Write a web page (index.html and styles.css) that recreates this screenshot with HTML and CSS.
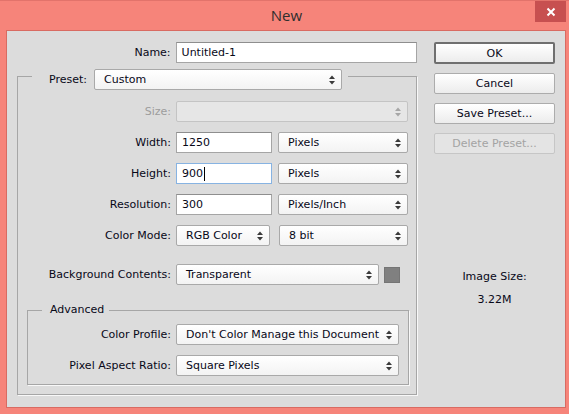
FILE: index.html
```html
<!DOCTYPE html>
<html lang="en">
<head>
<meta charset="utf-8">
<title>New</title>
<link rel="stylesheet" href="styles.css">
</head>
<body>
<div class="window">
  <header class="titlebar">
    <span class="tb-spacer"></span>
    <h1 class="title">New</h1>
    <div class="close" aria-label="Close">
      <svg width="10" height="10" viewBox="0 0 10 10"><path d="M1.5 1.5 L8.5 8.5 M8.5 1.5 L1.5 8.5" stroke="#fff" stroke-width="2" fill="none"/></svg>
    </div>
  </header>
  <main class="client">
    <section class="left">
      <div class="row">
        <span class="lbl lbl-name">Name:</span>
        <div class="input w-name">Untitled-1</div>
      </div>
      <fieldset class="group outer">
        <legend class="legend-preset">
          <span class="lbl-inline">Preset:</span>
          <span class="select w-preset"><span class="sel-text">Custom</span><svg class="arrows" width="6" height="10" viewBox="0 0 6 10"><polygon points="0,4 3,0.5 6,4"/><polygon points="0,6 3,9.5 6,6"/></svg></span>
        </legend>
        <div class="rows">
          <div class="row">
            <span class="lbl disabled">Size:</span>
            <span class="select w-size is-disabled"><span class="sel-text"></span><svg class="arrows" width="6" height="10" viewBox="0 0 6 10"><polygon points="0,4 3,0.5 6,4"/><polygon points="0,6 3,9.5 6,6"/></svg></span>
          </div>
          <div class="row">
            <span class="lbl">Width:</span>
            <div class="input w-num">1250</div>
            <span class="select w-unit"><span class="sel-text">Pixels</span><svg class="arrows" width="6" height="10" viewBox="0 0 6 10"><polygon points="0,4 3,0.5 6,4"/><polygon points="0,6 3,9.5 6,6"/></svg></span>
          </div>
          <div class="row">
            <span class="lbl">Height:</span>
            <div class="input w-num focused">900<span class="caret"></span></div>
            <span class="select w-unit"><span class="sel-text">Pixels</span><svg class="arrows" width="6" height="10" viewBox="0 0 6 10"><polygon points="0,4 3,0.5 6,4"/><polygon points="0,6 3,9.5 6,6"/></svg></span>
          </div>
          <div class="row">
            <span class="lbl">Resolution:</span>
            <div class="input w-num">300</div>
            <span class="select w-unit"><span class="sel-text">Pixels/Inch</span><svg class="arrows" width="6" height="10" viewBox="0 0 6 10"><polygon points="0,4 3,0.5 6,4"/><polygon points="0,6 3,9.5 6,6"/></svg></span>
          </div>
          <div class="row">
            <span class="lbl">Color Mode:</span>
            <span class="select w-mode"><span class="sel-text">RGB Color</span><svg class="arrows" width="6" height="10" viewBox="0 0 6 10"><polygon points="0,4 3,0.5 6,4"/><polygon points="0,6 3,9.5 6,6"/></svg></span>
            <span class="select w-bits"><span class="sel-text">8 bit</span><svg class="arrows" width="6" height="10" viewBox="0 0 6 10"><polygon points="0,4 3,0.5 6,4"/><polygon points="0,6 3,9.5 6,6"/></svg></span>
          </div>
          <div class="row row-bg">
            <span class="lbl">Background Contents:</span>
            <span class="select w-bg"><span class="sel-text">Transparent</span><svg class="arrows" width="6" height="10" viewBox="0 0 6 10"><polygon points="0,4 3,0.5 6,4"/><polygon points="0,6 3,9.5 6,6"/></svg></span>
            <span class="swatch"></span>
          </div>
        </div>
        <fieldset class="group advanced">
          <legend class="legend-adv">Advanced</legend>
          <div class="rows">
            <div class="row">
              <span class="lbl lbl-adv">Color Profile:</span>
              <span class="select w-adv"><span class="sel-text">Don't Color Manage this Document</span><svg class="arrows" width="6" height="10" viewBox="0 0 6 10"><polygon points="0,4 3,0.5 6,4"/><polygon points="0,6 3,9.5 6,6"/></svg></span>
            </div>
            <div class="row">
              <span class="lbl lbl-adv">Pixel Aspect Ratio:</span>
              <span class="select w-adv"><span class="sel-text">Square Pixels</span><svg class="arrows" width="6" height="10" viewBox="0 0 6 10"><polygon points="0,4 3,0.5 6,4"/><polygon points="0,6 3,9.5 6,6"/></svg></span>
            </div>
          </div>
        </fieldset>
      </fieldset>
    </section>
    <aside class="right">
      <div class="btn default">OK</div>
      <div class="btn">Cancel</div>
      <div class="btn">Save Preset...</div>
      <div class="btn is-disabled">Delete Preset...</div>
      <div class="size-info">
        <div class="size-label">Image Size:</div>
        <div class="size-value">3.22M</div>
      </div>
    </aside>
  </main>
</div>
</body>
</html>
```

FILE: styles.css
```css
* { box-sizing: border-box; }

html, body {
  margin: 0;
  padding: 0;
  background: #f6847a;
}

body {
  font-family: "DejaVu Sans", Verdana, sans-serif;
  font-size: 11px;
  color: #080818;
}

.window {
  width: 569px;
  height: 414px;
  background: #f6847a;
  border-top: 1px solid #e2736b;
  display: flex;
  flex-direction: column;
}

.titlebar {
  height: 29px;
  display: grid;
  grid-template-columns: 1fr auto 1fr;
  align-items: start;
}

.title {
  margin: 0;
  padding-top: 4px;
  font-family: "Open Sans", "Noto Sans", sans-serif;
  font-weight: normal;
  font-size: 15px;
  line-height: 20px;
  color: #2e2e2e;
  padding-left: 4px;
}

.close {
  justify-self: end;
  width: 31px;
  height: 21px;
  margin-right: 3px;
  background: #c75050;
  display: flex;
  align-items: center;
  justify-content: center;
}

.client {
  flex: 1;
  margin: 0 3px 6px 6px;
  border: 1px solid #d96b62;
  background: #dcdcdc;
  padding: 11px 10px 0 10px;
  display: flex;
  gap: 17px;
}

.left {
  width: 400px;
  display: flex;
  flex-direction: column;
}

.right {
  width: 121px;
  display: flex;
  flex-direction: column;
  gap: 9px;
}

.row {
  display: flex;
  align-items: center;
  height: 21px;
}

.lbl {
  width: 153px;
  margin-right: 5px;
  text-align: right;
  white-space: nowrap;
}

.lbl-name { width: 154px; }
.lbl-adv { width: 143px; }

.lbl.disabled { color: #9c9c9c; }

.input {
  height: 21px;
  background: #fff;
  border: 1px solid #a5a5a5;
  border-top-color: #8e8e8e;
  padding: 0 5px;
  line-height: 19px;
  white-space: nowrap;
  display: flex;
  align-items: center;
}

.input.focused {
  border-color: #87b3e2;
}

.caret {
  display: inline-block;
  width: 1px;
  height: 14px;
  background: #000;
  margin-left: 1px;
}

.w-name { width: 242px; }
.w-num { width: 96px; margin-right: 6px; }

.select {
  height: 21px;
  display: inline-flex;
  align-items: center;
  justify-content: space-between;
  border: 1px solid #a9a9a9;
  border-radius: 2px;
  background: linear-gradient(#ffffff, #f3f3f3);
  padding: 0 6px 0 9px;
  white-space: nowrap;
  color: #080818;
}

.select .arrows { fill: #3a3a3a; flex: none; }

.select.is-disabled {
  background: #e6e6e6;
  border-color: #c4c4c4;
}
.select.is-disabled .arrows { fill: #a6a6a6; }

.w-preset { width: 248px; }
.w-size { width: 232px; }
.w-unit { width: 130px; }
.w-mode { width: 94px; margin-right: 9px; }
.w-bits { width: 129px; }
.w-bg { width: 203px; margin-right: 5px; }
.w-adv { width: 223px; }

.swatch {
  width: 16px;
  height: 16px;
  background: #808080;
  border: 1px solid #757575;
}

.group {
  margin: 0;
  min-width: 0;
  border: 1px solid #a6a6a6;
  box-shadow: 1px 1px 0 #f8f8f8;
}

.outer {
  width: 400px;
  padding: 11px 0 9px 0;
}

.legend-preset {
  margin-left: 14px;
  padding: 6px 6px 0 17px;
  display: flex;
  align-items: center;
}

.lbl-inline {
  margin-right: 7px;
}

.rows {
  display: flex;
  flex-direction: column;
  gap: 10px;
}

.row-bg { margin-top: 8px; }

.advanced {
  margin: 18px 7px 0 9px;
  padding: 7px 0 8px 0;
}

.legend-adv {
  margin-left: 14px;
  padding: 0 5px 0 8px;
  line-height: 14px;
}

.btn {
  height: 21px;
  border: 1px solid #acacac;
  border-radius: 2px;
  background: linear-gradient(#ffffff, #ececec);
  display: flex;
  align-items: center;
  justify-content: center;
  white-space: nowrap;
}

.btn.default {
  border: 2px solid #6f6f6f;
  height: 22px;
}

.btn.is-disabled {
  color: #a3a3a3;
  border-color: #c6c6c6;
  background: #e4e4e4;
}

.size-info {
  margin-top: 106px;
  text-align: center;
  line-height: 16px;
}

.size-value {
  margin-top: 7px;
}
```
